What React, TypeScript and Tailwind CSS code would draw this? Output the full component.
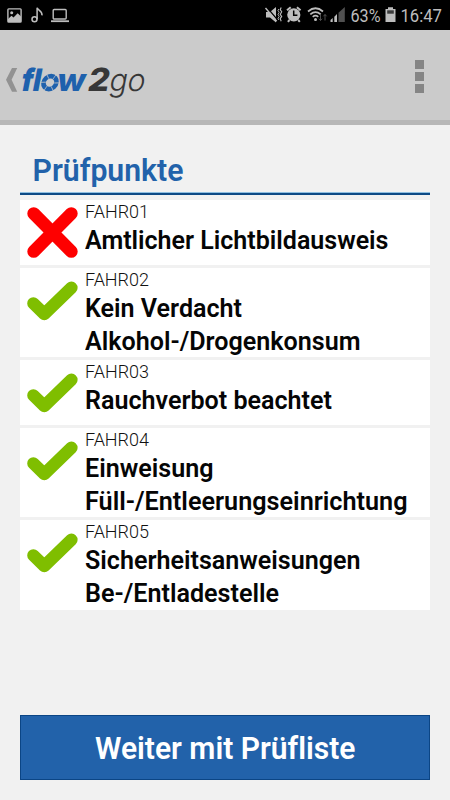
import React from 'react';

type Item = { code: string; lines: string[]; ok: boolean; widths: number[] };

const items: Item[] = [
  { code: 'FAHR01', lines: ['Amtlicher Lichtbildausweis'], ok: false, widths: [303.5] },
  { code: 'FAHR02', lines: ['Kein Verdacht', 'Alkohol-/Drogenkonsum'], ok: true, widths: [157, 275.5] },
  { code: 'FAHR03', lines: ['Rauchverbot beachtet'], ok: true, widths: [247] },
  { code: 'FAHR04', lines: ['Einweisung', 'Füll-/Entleerungseinrichtung'], ok: true, widths: [128.5, 322.5] },
  { code: 'FAHR05', lines: ['Sicherheitsanweisungen', 'Be-/Entladestelle'], ok: true, widths: [275.5, 194] },
];

function StatusBar() {
  return (
    <div className="flex h-[30px] items-center bg-black text-[#bdbdbd]">
      <svg className="ml-[7px] h-[15px] w-[15px]" viewBox="0 0 15 15">
        <rect x="0.9" y="0.9" width="13.2" height="13.2" rx="0.8" fill="none" stroke="currentColor" strokeWidth="1.4" />
        <circle cx="4.7" cy="4.8" r="1.5" fill="currentColor" />
        <path d="M1 11l3.5-3.3 2 1.8 4.2-4.2L14 8.5V14H1z" fill="currentColor" />
      </svg>
      <svg className="ml-[9px] h-[16px] w-[13px]" viewBox="0 0 13 16" fill="none" stroke="currentColor" strokeWidth="1.5">
        <circle cx="3.5" cy="12.3" r="2.5" />
        <path d="M6.1 12.3V.8C7 3.7 11.6 3.8 11 8.4" />
      </svg>
      <svg className="ml-[7px] h-[15px] w-[18px]" viewBox="0 0 18 15" fill="none" stroke="currentColor" strokeWidth="1.4">
        <rect x="2.2" y="1.5" width="13" height="9.5" rx="1" />
        <path d="M0 13.2h18" strokeWidth="1.8" />
      </svg>
      <div className="flex-1" />
      <svg className="h-[30px] w-[83px] shrink-0" viewBox="264 0 83 30" fill="none" stroke="currentColor">
        <path d="M266 12h4l6-5v15.5l-6-5h-4z" fill="currentColor" stroke="none" />
        <path d="M267 7.5l11 13" stroke="#000" strokeWidth="1.2" />
        <path d="M265.5 8l11.2 13.2" strokeWidth="1.4" />
        <path d="M278.8 9l-.8 1.5 1.2 1.8-1.2 2.2 1.2 2-1.2 1.8.8 1.7" strokeWidth="0.9" />
        <path d="M281.2 7.5l-1 2.2 1.5 2-1.5 2.7 1.5 2-1.5 2.2 1 2.7" strokeWidth="1.1" />
        <circle cx="293.8" cy="14.8" r="6.6" fill="currentColor" stroke="none" />
        <path d="M287 10.3l3.7-3M296.9 7.3l3.7 3M289.5 20l-1.6 1.8M298.2 20l1.6 1.8" strokeWidth="2" />
        <path d="M293.7 10.5v4.8h3.7" stroke="#000" strokeWidth="1.5" />
        <path d="M308 11.5q7.5-6.5 15 0M310.3 14.3q5.2-4.5 10.4 0M312.7 16.8q2.8-2.2 5.6 0" strokeWidth="1.7" />
        <circle cx="315.5" cy="19.5" r="1.5" fill="currentColor" stroke="none" />
        <path d="M320.5 14.5v6m-1.6-1.8l1.6 1.8 1.6-1.8M325 20.5v-6m-1.6 1.8l1.6-1.8 1.6 1.8" stroke="#505050" strokeWidth="1" />
        <path d="M330.5 22v-2l2.2-2V22zM334.3 22v-5.2l2.7-2.7V22z" fill="currentColor" stroke="none" />
        <path d="M338.5 22V12.8l6.3-5.8v15z" fill="#505050" stroke="none" />
      </svg>
      <svg className="h-[30px] w-[103px] shrink-0" viewBox="347 0 103 30">
        <text x="350.5" y="22" textLength="30" lengthAdjust="spacingAndGlyphs" fill="currentColor" className="font-['Roboto',sans-serif] text-[19px]">63%</text>
        <path d="M388 7.3h5V9h2.5v13h-10V9h2.5z" fill="currentColor" />
        <path d="M387.2 10.3h6.6v3.4h-6.6z" fill="#3c3c3c" />
        <text x="400.5" y="22" textLength="41.5" lengthAdjust="spacingAndGlyphs" fill="currentColor" className="font-['Roboto',sans-serif] text-[19px]">16:47</text>
      </svg>
    </div>
  );
}

function Logo() {
  return (
    <svg className="h-[90px] w-[150px]" viewBox="0 30 150 90">
      <path d="M12 68H17.2L11.6 79.8 17.2 91.8H12L6 79.8z" fill="#929292" />
      <g className="font-['Inter',sans-serif] [font-variant-ligatures:none]" transform="translate(0 91.3) skewX(-11)">
        <text x="20" y="0" textLength="19.5" lengthAdjust="spacingAndGlyphs" fill="#1e61ad" className="text-[31px] font-black">fl</text>
        <text x="55.5" y="0" textLength="28.5" lengthAdjust="spacingAndGlyphs" fill="#1e61ad" className="text-[31px] font-extrabold">w</text>
        <text x="86.5" y="0" textLength="21.5" lengthAdjust="spacingAndGlyphs" fill="#373737" className="text-[32px] font-extrabold">2</text>
        <text x="108" y="0" textLength="36" lengthAdjust="spacingAndGlyphs" fill="#373737" className="text-[31px] font-light">go</text>
      </g>
      <g transform="translate(50 82.6) skewX(-8)">
        <circle r="6.5" fill="none" stroke="#1e61ad" strokeWidth="4.6" />
        <g stroke="#cbcbcb" strokeWidth="0.7">
          {[0, 60, 120, 180, 240, 300].map((a) => (
            <path key={a} d="M2.5-3.5L5.2-8.5" transform={`rotate(${a})`} />
          ))}
        </g>
      </g>
    </svg>
  );
}

function StatusIcon({ ok }: { ok: boolean }) {
  return (
    <svg className="h-[64px] w-[65px] shrink-0" viewBox="0 0 65 64" fill="none" strokeLinecap="round" strokeLinejoin="round">
      {ok ? (
        <path d="M13.4 35.4L24.3 46 51.4 19.8" stroke="#7fbe00" strokeWidth="12.4" />
      ) : (
        <path d="M13.7 13.6L51.3 51.4M51.3 13.6L13.7 51.4" stroke="#fe0000" strokeWidth="12.8" />
      )}
    </svg>
  );
}

export default function App() {
  return (
    <div className="flex h-[800px] w-[450px] flex-col overflow-hidden bg-[#f1f1f1] font-['Roboto',sans-serif]">
      <StatusBar />
      <header className="flex h-[95px] items-start justify-between border-b-[5px] border-[#b7b7b7] bg-[#cbcbcb]">
        <Logo />
        <div className="mt-[30px] mr-[26px] flex flex-col gap-[3px]">
          <i className="h-[9px] w-[9px] bg-[#858585]" />
          <i className="h-[9px] w-[9px] bg-[#858585]" />
          <i className="h-[9px] w-[9px] bg-[#858585]" />
        </div>
      </header>
      <main className="flex flex-1 flex-col px-5 pb-5">
        <h1 className="h-[70px] border-b-2 border-[#0d4a85]">
          <svg className="h-[68px] w-full border-b border-[#8fbfe0]" viewBox="20 125 410 67">
            <text x="32.5" y="181.3" textLength="151" lengthAdjust="spacingAndGlyphs" fill="#2262aa" className="text-[31px] font-semibold">Prüfpunkte</text>
          </svg>
        </h1>
        <ul className="mt-[5px] flex flex-col gap-[2.5px]">
          {items.map((item) => (
            <li key={item.code} className={`flex bg-white ${item.lines.length > 1 ? 'h-[89.8px]' : 'h-[65.2px]'}`}>
              <StatusIcon ok={item.ok} />
              <svg className="h-full w-[345px]" viewBox={`0 0 345 ${item.lines.length > 1 ? 89.8 : 65.2}`}>
                <text x="0" y="17.7" textLength="64" lengthAdjust="spacingAndGlyphs" fill="#111" className="text-[17.5px] font-light">{item.code}</text>
                {item.lines.map((line, i) => (
                  <text key={line} x="0" y={49.2 + i * 33.2} textLength={item.widths[i]} lengthAdjust="spacingAndGlyphs" fill="#050505" className="text-[25px] font-semibold">{line}</text>
                ))}
              </svg>
            </li>
          ))}
        </ul>
        <button className="mt-auto h-[65px] w-full border border-[#0b4585] bg-[#2262aa]">
          <svg className="h-[63px] w-full" viewBox="21 716 408 63">
            <text x="95" y="759" textLength="260.5" lengthAdjust="spacingAndGlyphs" fill="#fff" className="text-[31px] font-semibold [font-variant-ligatures:none]">Weiter mit Prüfliste</text>
          </svg>
        </button>
      </main>
    </div>
  );
}
